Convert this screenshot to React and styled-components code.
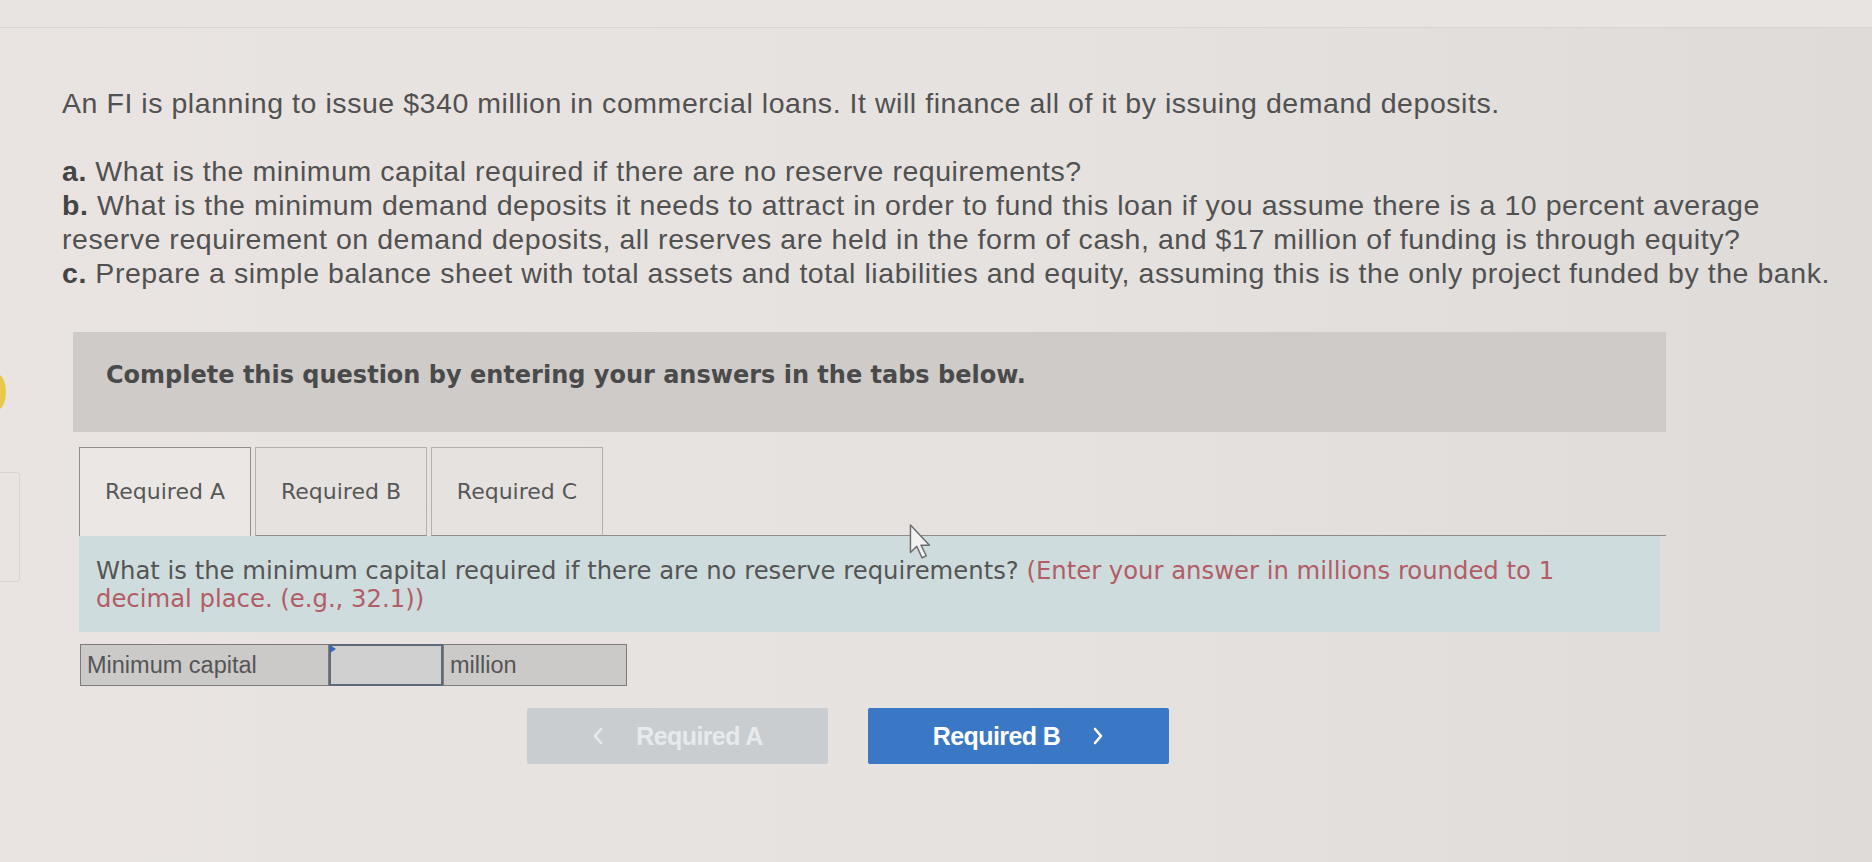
import styled, { createGlobalStyle } from "styled-components";

const GlobalStyle = createGlobalStyle`
    html, body {
        margin: 0;
        padding: 0;
    }
    body {
        width: 1872px;
        height: 862px;
        overflow: hidden;
        background: linear-gradient(90deg, #e9e4e1 0%, #e6e2df 55%, #dedbd8 100%);
    }
`

export default function App() {
    return (
        <>
            <GlobalStyle />
            <Screen>
                <TopBar />
                <EdgeDot />
                <EdgeBox />
                <Main>
                    <Intro>
                        An FI is planning to issue $340 million in commercial loans. It will finance all of it by issuing demand deposits.
                    </Intro>
                    <Parts>
                        <p><b>a.</b> What is the minimum capital required if there are no reserve requirements?</p>
                        <p><b>b.</b> What is the minimum demand deposits it needs to attract in order to fund this loan if you assume there is a 10 percent average reserve requirement on demand deposits, all reserves are held in the form of cash, and $17 million of funding is through equity?</p>
                        <p><b>c.</b> Prepare a simple balance sheet with total assets and total liabilities and equity, assuming this is the only project funded by the bank.</p>
                    </Parts>

                    <Work>
                        <Instruction>
                            <p>Complete this question by entering your answers in the tabs below.</p>
                        </Instruction>

                        <Tabs>
                            <Tab $active>Required A</Tab>
                            <Tab>Required B</Tab>
                            <Tab>Required C</Tab>
                            <TabRule />
                        </Tabs>

                        <Panel>
                            <Prompt>
                                What is the minimum capital required if there are no reserve requirements? <Hint>(Enter your answer in millions rounded to 1 decimal place. (e.g., 32.1))</Hint>
                            </Prompt>
                            <Cursor viewBox="0 0 24 36">
                                <path d="M2 2 L2 28 L8 22 L13 33 L17 31 L12 21 L20 21 Z" fill="#f2f2f2" stroke="#6d6d6d" strokeWidth="1.4" strokeLinejoin="round" />
                            </Cursor>
                        </Panel>

                        <AnswerRow>
                            <Cell $width="249px">Minimum capital</Cell>
                            <InputCell>
                                <Caret />
                            </InputCell>
                            <Cell $width="184px">million</Cell>
                        </AnswerRow>

                        <Nav>
                            <NavButton $disabled>
                                <Chevron viewBox="0 0 12 20"><path d="M9 3 L3 10 L9 17" /></Chevron>
                                Required A
                            </NavButton>
                            <NavButton>
                                Required B
                                <Chevron viewBox="0 0 12 20"><path d="M3 3 L9 10 L3 17" /></Chevron>
                            </NavButton>
                        </Nav>
                    </Work>
                </Main>
            </Screen>
        </>
    )
}

const Screen = styled.div`
    position: relative;
    width: 1872px;
    height: 862px;
    color: #4b4b4b;
`

const TopBar = styled.div`
    height: 27px;
    border-bottom: 1px solid #d9d5d1;
    background: #e7e4e2;
`

const EdgeDot = styled.div`
    position: absolute;
    left: -12px;
    top: 374px;
    width: 18px;
    height: 36px;
    border-radius: 50%;
    background: #e8c94a;
`

const EdgeBox = styled.div`
    position: absolute;
    left: -4px;
    top: 472px;
    width: 22px;
    height: 108px;
    border: 1px solid #d9d5d2;
    border-radius: 3px;
`

const Main = styled.main`
    padding: 58px 0 0 62px;
`

const Intro = styled.p`
    margin: 0;
    font-family: "Liberation Sans", Arial, sans-serif;
    font-size: 28.5px;
    letter-spacing: 0.55px;
    line-height: 34px;
    color: #515151;
`

const Parts = styled.div`
    margin-top: 34px;
    width: 1785px;
    font-family: "Liberation Sans", Arial, sans-serif;
    font-size: 28.5px;
    letter-spacing: 0.55px;
    line-height: 34px;
    color: #515151;

    p {
        margin: 0;
    }

    b {
        font-weight: 700;
        color: #444;
    }
`

const Work = styled.section`
    margin: 42px 0 0 11px;
    width: 1593px;
`

const Instruction = styled.div`
    height: 100px;
    box-sizing: border-box;
    padding: 28px 0 0 33px;
    background: #cecbc9;

    p {
        margin: 0;
        font-family: "DejaVu Sans", Verdana, sans-serif;
        font-weight: 700;
        font-size: 24px;
        line-height: 30px;
        color: #4a4a4a;
    }
`

const Tabs = styled.div`
    display: flex;
    align-items: flex-end;
    gap: 4px;
    margin: 15px 0 0 6px;
`

const Tab = styled.div`
    width: 172px;
    height: 89px;
    box-sizing: border-box;
    display: flex;
    align-items: center;
    justify-content: center;
    font-family: "DejaVu Sans", Verdana, sans-serif;
    font-size: 22px;
    color: #575757;
    background: ${p => p.$active ? "#ebe7e4" : "#e6e2df"};
    border: 1px solid ${p => p.$active ? "#8f8d8b" : "#b3b0ad"};
    border-bottom: ${p => p.$active ? "none" : "1px solid #8f8d8b"};
    padding-bottom: ${p => p.$active ? "2px" : "0"};
`

const TabRule = styled.div`
    flex: 1;
    margin-left: -4px;
    border-bottom: 1px solid #8f8d8b;
`

const Panel = styled.div`
    position: relative;
    margin-left: 6px;
    width: 1581px;
    height: 96px;
    box-sizing: border-box;
    padding: 21px 60px 0 17px;
    background: #cfdcdd;
`

const Prompt = styled.p`
    margin: 0;
    font-family: "DejaVu Sans", Verdana, sans-serif;
    font-size: 24.3px;
    line-height: 28px;
    color: #555;
`

const Hint = styled.span`
    color: #b25d66;
`

const Cursor = styled.svg`
    position: absolute;
    left: 829px;
    top: -13px;
    width: 26px;
    height: 38px;
`

const AnswerRow = styled.div`
    display: flex;
    margin: 12px 0 0 7px;
    height: 42px;
`

const Cell = styled.div`
    width: ${p => p.$width};
    box-sizing: border-box;
    display: flex;
    align-items: center;
    padding-left: 6px;
    font-family: "Liberation Sans", Arial, sans-serif;
    font-size: 23.5px;
    color: #555;
    background: #cbcac9;
    border: 1px solid #7d7c7b;
`

const InputCell = styled.div`
    position: relative;
    width: 114px;
    box-sizing: border-box;
    background: #d0d0d0;
    border: 2px solid #5e6a7a;
`

const Caret = styled.div`
    position: absolute;
    left: -1px;
    top: -1px;
    width: 0;
    height: 0;
    border-left: 6px solid #3568b8;
    border-top: 4px solid transparent;
    border-bottom: 4px solid transparent;
`

const Nav = styled.div`
    display: flex;
    gap: 40px;
    margin: 22px 0 0 454px;
`

const NavButton = styled.div`
    width: 301px;
    height: 56px;
    box-sizing: border-box;
    display: flex;
    align-items: center;
    justify-content: center;
    gap: 32px;
    border-radius: 2px;
    font-family: "Liberation Sans", Arial, sans-serif;
    font-weight: 700;
    font-size: 25px;
    letter-spacing: -0.6px;
    background: ${p => p.$disabled ? "#c9cdd0" : "#3a77c5"};
    color: ${p => p.$disabled ? "#e7eaec" : "#ffffff"};
`

const Chevron = styled.svg`
    width: 12px;
    height: 20px;
    fill: none;
    stroke: currentColor;
    stroke-width: 2.6;
    stroke-linecap: round;
    stroke-linejoin: round;
`
